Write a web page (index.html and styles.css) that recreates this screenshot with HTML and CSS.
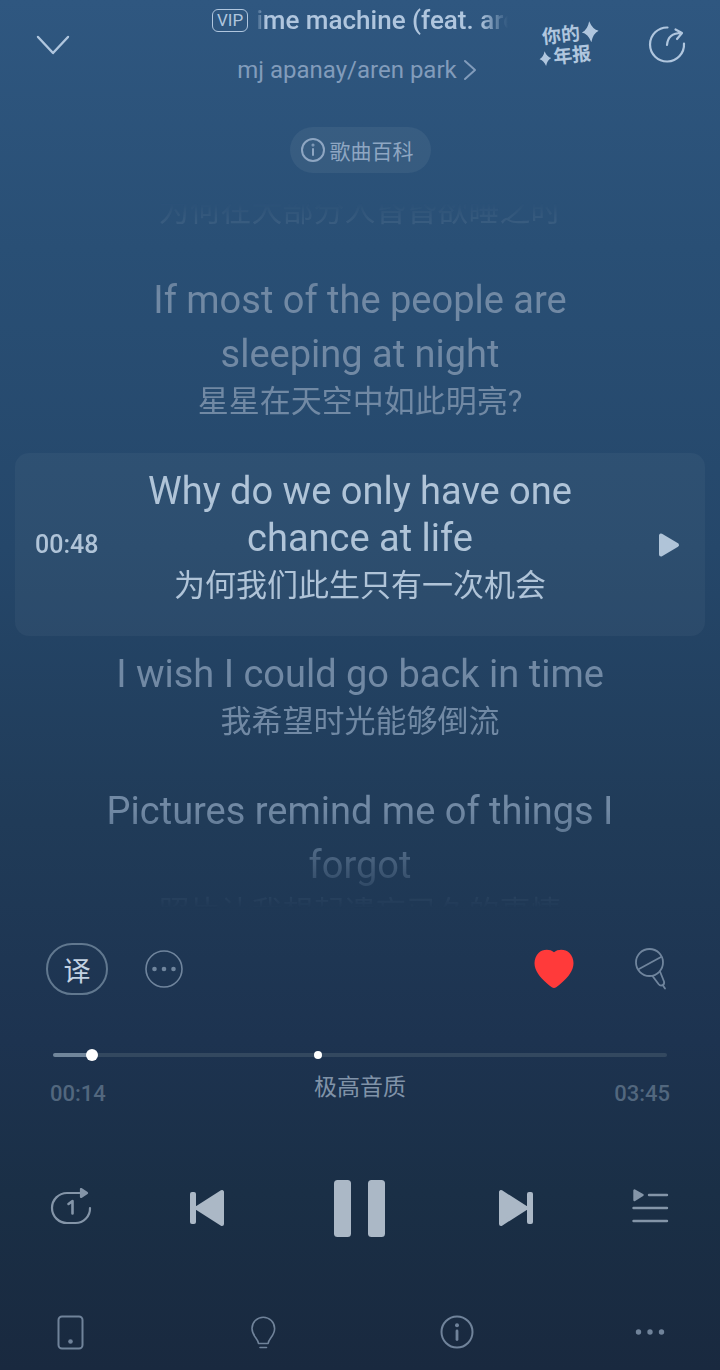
FILE: index.html
```html
<!DOCTYPE html>
<html lang="zh-CN">
<head>
  <meta charset="UTF-8">
  <meta name="viewport" content="width=device-width, initial-scale=1.0">
  <title>time machine (feat. aren park)</title>
  <link rel="stylesheet" href="styles.css">
</head>
<body>
  <div class="player">

    <header class="header">
      <div class="header-side">
        <button class="icon-btn" aria-label="收起">
          <svg width="36" height="24" viewBox="0 0 36 24" fill="none" stroke="currentColor" stroke-width="2.4" stroke-linecap="round" stroke-linejoin="round"><path d="M4 5l15 16L34 5"/></svg>
        </button>
      </div>
      <div class="song">
        <div class="song-title">
          <span class="vip">VIP</span>
          <h1 class="marquee">ime machine (feat. aren park)</h1>
        </div>
        <a class="artist" href="#">mj apanay/aren park
          <svg width="14" height="22" viewBox="0 0 14 22" fill="none" stroke="currentColor" stroke-width="2" stroke-linecap="round" stroke-linejoin="round"><path d="M2 2l10 9-10 9"/></svg>
        </a>
      </div>
      <div class="header-side header-right">
        <a class="report" href="#">
          <span class="report-line report-top">你的<svg width="17" height="22" viewBox="0 0 17 21" fill="currentColor"><path d="M8.500 0Q11 8.500 17 10.500Q11 12.500 8.500 21Q6 12.500 0 10.500Q6 8.500 8.500 0z"/></svg></span>
          <span class="report-line"><svg width="12" height="16" viewBox="0 0 17 21" fill="currentColor"><path d="M8.500 0Q11 8.500 17 10.500Q11 12.500 8.500 21Q6 12.500 0 10.500Q6 8.500 8.500 0z"/></svg>年报</span>
        </a>
        <button class="icon-btn" aria-label="分享">
          <svg width="38" height="38" viewBox="0 0 38 38" fill="none" stroke="currentColor" stroke-width="2.200" stroke-linecap="round" stroke-linejoin="round"><path d="M19.500 2.500A17 17 0 1 0 36 18.500M19 20c.5-7 5-12 14.500-12M27.500 4.500l6.500 3.500-5 6"/></svg>
        </button>
      </div>
    </header>

    <button class="wiki">
      <svg width="26" height="26" viewBox="0 0 26 26" fill="none" stroke="currentColor" stroke-width="2" stroke-linecap="round"><circle cx="13" cy="13" r="11"/><path d="M13 12v6"/><circle cx="13" cy="8" r=".5"/></svg>
      歌曲百科
    </button>

    <main class="lyrics">
      <div class="line">
        <p class="trans">为何在大部分人昏昏欲睡之时</p>
      </div>
      <div class="line">
        <p class="orig">If most of the people are<br>sleeping at night</p>
        <p class="trans">星星在天空中如此明亮?</p>
      </div>
      <div class="line active">
        <time class="line-time">00:48</time>
        <div class="line-text">
          <p class="orig">Why do we only have one<br>chance at life</p>
          <p class="trans">为何我们此生只有一次机会</p>
        </div>
        <button class="icon-btn line-play" aria-label="从此处播放">
          <svg width="22" height="26" viewBox="0 0 22 26" fill="currentColor" stroke="currentColor" stroke-width="4" stroke-linejoin="round"><path d="M3 3.500v19L19 13z"/></svg>
        </button>
      </div>
      <div class="line">
        <p class="orig">I wish I could go back in time</p>
        <p class="trans">我希望时光能够倒流</p>
      </div>
      <div class="line">
        <p class="orig">Pictures remind me of things I<br>forgot</p>
        <p class="trans">照片让我想起遗忘已久的事情</p>
      </div>
    </main>

    <div class="tools">
      <button class="translate">译</button>
      <button class="icon-btn" aria-label="更多歌词选项">
        <svg width="38" height="38" viewBox="0 0 38 38" fill="none" stroke="currentColor" stroke-width="1.600"><circle cx="19" cy="19" r="18"/><g fill="currentColor" stroke="none"><circle cx="9.500" cy="19" r="2.300"/><circle cx="19" cy="19" r="2.300"/><circle cx="28.500" cy="19" r="2.300"/></g></svg>
      </button>
      <button class="icon-btn like" aria-label="喜欢">
        <svg width="40" height="40" viewBox="0 0 40 40" fill="currentColor"><path d="M20 3.300C24-.2 31.500 0 35.500 4c4 4.200 5 10.500 3 15.800-2.500 6.700-9 13.200-16.300 18.500-1.500 1-2.900 1-4.400 0C10.500 33 4 26.500 1.500 19.800-.5 14.500.5 8.200 4.500 4 8.500 0 16-.2 20 3.300z"/></svg>
      </button>
      <button class="icon-btn" aria-label="唱歌">
        <svg width="32" height="42" viewBox="0 0 32 42" fill="none" stroke="currentColor" stroke-width="1.800" stroke-linecap="round" stroke-linejoin="round"><circle cx="14.500" cy="14.500" r="13.500"/><path d="M4 21L26 9M17.500 28l6 8c2.500 3 6.500 1 5.500-2.500l-4-10M28 37.500l2 3"/></svg>
      </button>
    </div>

    <div class="progress">
      <input class="seek" type="range" min="0" max="1000" value="55" aria-label="播放进度">
      <span class="climax"></span>
    </div>
    <div class="times">
      <span class="time">00:14</span>
      <button class="quality">极高音质</button>
      <span class="time time-end">03:45</span>
    </div>

    <div class="transport">
      <button class="icon-btn dim" aria-label="单曲循环">
        <svg width="42" height="40" viewBox="0 0 42 40" fill="none" stroke="currentColor" stroke-width="2.200" stroke-linecap="round" stroke-linejoin="round"><path d="M31 5H17a15 15 0 0 0 0 30h8a14.500 14.500 0 0 0 15-15"/><path d="M31 1v8l6-4z" fill="currentColor"/><path d="M18.500 16l4-3V25.500" stroke-width="2.600"/></svg>
      </button>
      <button class="icon-btn" aria-label="上一首">
        <svg width="34" height="38" viewBox="0 0 34 38" fill="currentColor"><rect x="0" y="3" width="6" height="32" rx="2"/><path d="M7 19L32 3v32z" stroke="currentColor" stroke-width="4" stroke-linejoin="round"/></svg>
      </button>
      <button class="icon-btn pause" aria-label="暂停">
        <svg width="52" height="58" viewBox="0 0 52 58" fill="currentColor"><rect x="0" y="1" width="17" height="57" rx="3.500"/><rect x="34" y="1" width="17" height="57" rx="3.500"/></svg>
      </button>
      <button class="icon-btn" aria-label="下一首">
        <svg width="34" height="38" viewBox="0 0 34 38" fill="currentColor"><rect x="28" y="3" width="6" height="32" rx="2"/><path d="M27 19L2 3v32z" stroke="currentColor" stroke-width="4" stroke-linejoin="round"/></svg>
      </button>
      <button class="icon-btn dim" aria-label="播放列表">
        <svg width="38" height="38" viewBox="0 0 38 38" fill="none" stroke="currentColor" stroke-width="2.400" stroke-linecap="round" stroke-linejoin="round"><path d="M18 6h18M2.500 19H36M2.500 32H36"/><path d="M3.500 1.500V11l8-5z" fill="currentColor"/></svg>
      </button>
    </div>

    <nav class="bottom">
      <button class="icon-btn" aria-label="设备">
        <svg width="36" height="36" viewBox="0 0 36 36" fill="none" stroke="currentColor" stroke-width="2"><rect x="6.500" y="2.500" width="24" height="32" rx="3.500"/><circle cx="18.500" cy="27.500" r="2.300" fill="currentColor" stroke="none"/></svg>
      </button>
      <button class="icon-btn" aria-label="灯光">
        <svg width="36" height="36" viewBox="0 0 36 36" fill="none" stroke="currentColor" stroke-width="1.600" stroke-linecap="round" stroke-linejoin="round"><path d="M13.500 29.500c-.5-5-6.500-7.500-6.500-15a11.300 11.300 0 0 1 22.600 0c0 7.500-6 10-6.500 15zM15 33.500h6.500"/></svg>
      </button>
      <button class="icon-btn" aria-label="歌曲信息">
        <svg width="36" height="36" viewBox="0 0 36 36" fill="none" stroke="currentColor" stroke-width="2" stroke-linecap="round"><circle cx="18" cy="18" r="15.500"/><path d="M18 17v8.500" stroke-width="2.800"/><circle cx="18" cy="11.300" r="2" fill="currentColor" stroke="none"/></svg>
      </button>
      <button class="icon-btn" aria-label="更多">
        <svg width="36" height="36" viewBox="0 0 36 36" fill="currentColor"><circle cx="6.500" cy="18" r="2.700"/><circle cx="18" cy="18" r="2.700"/><circle cx="29.500" cy="18" r="2.700"/></svg>
      </button>
    </nav>

  </div>
</body>
</html>
```
FILE: styles.css
```css
* {
  box-sizing: border-box;
}
body {
  margin: 0;
  font-family: Roboto, "Noto Sans CJK SC", sans-serif;
  background-color: #19293f;
}
h1, p {
  margin: 0;
  font-weight: 400;
}
a {
  color: inherit;
  text-decoration: none;
}
button {
  margin: 0;
  padding: 0;
  border: none;
  background: none;
  color: inherit;
  font-family: inherit;
  cursor: pointer;
}
svg {
  display: block;
  flex: none;
}
.player {
  display: flex;
  flex-direction: column;
  height: 100vh;
  color: #b0c6de;
  background: linear-gradient(#2f5780 0%, #294f75 18%, #25476a 40%, #203b58 60%, #1d3350 76%, #1a2f46 87%, #19293f 100%);
}

/* header */
.header {
  display: flex;
  align-items: center;
  height: 88px;
  padding: 0 34px;
}
.header-side {
  flex: 1;
  display: flex;
  align-items: center;
}
.header-right {
  justify-content: flex-end;
  gap: 48px;
}
.song {
  display: flex;
  flex-direction: column;
  align-items: center;
  gap: 16px;
  width: 296px;
}
.song-title {
  display: flex;
  align-items: center;
  gap: 8px;
  width: 100%;
  height: 36px;
}
.vip {
  padding: 0 4px;
  border: 1px solid #b0c6de;
  border-radius: 6px;
  font-size: 17px;
  line-height: 21px;
}
.marquee {
  flex: 1;
  overflow: hidden;
  white-space: nowrap;
  font-size: 26px;
  font-weight: 500;
  line-height: 36px;
  -webkit-mask-image: linear-gradient(to right, transparent, #000 10px, #000 224px, transparent);
  mask-image: linear-gradient(to right, transparent, #000 10px, #000 224px, transparent);
}
.artist {
  display: flex;
  align-items: center;
  gap: 6px;
  padding-right: 6px;
  font-size: 24px;
  line-height: 32px;
  color: #829cbb;
}
.report {
  display: flex;
  flex-direction: column;
  width: 62px;
  font-size: 19px;
  font-weight: 700;
  line-height: 21px;
  transform: rotate(-6deg);
}
.report-line {
  display: flex;
  align-items: center;
  gap: 2px;
}
.report-top {
  justify-content: flex-end;
}
.icon-btn {
  display: flex;
  align-items: center;
  justify-content: center;
}

.wiki {
  align-self: center;
  display: flex;
  align-items: center;
  gap: 4px;
  height: 46px;
  margin: 39px 0 30px;
  padding: 0 17px 0 10px;
  border-radius: 23px;
  background-color: rgba(255, 255, 255, 0.06);
  color: #8ea6c2;
  font-size: 21px;
}

/* lyrics */
.lyrics {
  flex: 1;
  min-height: 0;
  overflow: hidden;
  text-align: center;
  color: #7189a4;
  -webkit-mask-image: linear-gradient(transparent, #000 90px, #000 calc(100% - 100px), transparent calc(100% - 2px));
  mask-image: linear-gradient(transparent, #000 90px, #000 calc(100% - 100px), transparent calc(100% - 2px));
}
.line {
  margin-bottom: 41px;
}
.line:first-child {
  margin-top: -13px;
}
.orig {
  font-size: 38px;
  line-height: 54px;
}
.trans {
  font-size: 31px;
  line-height: 42px;
}
.active {
  display: flex;
  align-items: center;
  margin: -11px 15px 11px;
  padding: 15px 20px 27px;
  border-radius: 14px;
  background-color: rgba(255, 255, 255, 0.04);
  color: #b0c4d8;
}
.line-text {
  flex: 1;
}
.active .orig,
.active .trans {
  line-height: 47px;
}
.line-time,
.line-play {
  width: 66px;
  padding-top: 12px;
}
.line-time {
  text-align: left;
  font-size: 25px;
  font-weight: 500;
}
.line-play {
  justify-content: flex-end;
  padding-right: 5px;
}

/* tools above the progress bar */
.tools {
  display: flex;
  align-items: center;
  gap: 37px;
  margin-top: 33px;
  padding: 0 53px 0 46px;
  color: #70859d;
}
.translate {
  width: 62px;
  height: 52px;
  border: 2px solid #61788f;
  border-radius: 26px;
  color: #c3d2e2;
  font-size: 27px;
}
.like {
  margin-left: auto;
  margin-right: 24px;
  color: #ff3a3a;
}

/* progress */
.progress {
  position: relative;
  display: flex;
  margin: 54px 53px 0;
}
.seek {
  -webkit-appearance: none;
  appearance: none;
  width: 100%;
  height: 12px;
  margin: 0;
  background: transparent;
}
.seek::-webkit-slider-runnable-track {
  height: 4px;
  border-radius: 2px;
  background: linear-gradient(to right, #71869b 6%, #33485f 6%);
}
.seek::-webkit-slider-thumb {
  -webkit-appearance: none;
  width: 12px;
  height: 12px;
  margin-top: -4px;
  border-radius: 50%;
  background-color: #fff;
}
/* marks where the chorus begins */
.climax {
  position: absolute;
  left: 43%;
  top: 2px;
  width: 8px;
  height: 8px;
  margin-left: -3px;
  border-radius: 50%;
  background-color: #fff;
}
.times {
  display: flex;
  align-items: flex-start;
  margin: 9px 50px 0;
  color: #52677e;
  line-height: 36px;
}
.time {
  flex: 1;
  padding-top: 6px;
  font-size: 22px;
  font-weight: 500;
}
.time-end {
  text-align: right;
}
.quality {
  color: #8093a8;
  font-size: 23px;
  line-height: 36px;
}

/* playback buttons */
.transport {
  display: flex;
  align-items: center;
  justify-content: space-between;
  margin-top: 67px;
  padding: 0 51px 0 50px;
  color: #abb8c6;
}
.pause {
  padding: 0 15px 0 11px;
}
.dim {
  color: #8495a8;
}
.bottom {
  display: flex;
  justify-content: space-between;
  margin-top: 77px;
  padding: 0 52px 20px;
  color: #70839a;
}
```
